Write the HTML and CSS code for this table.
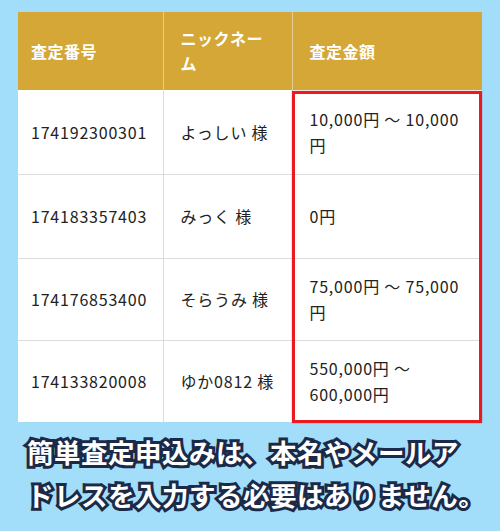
FILE: index.html
```html
<!DOCTYPE html>
<html lang="ja">
<head>
<meta charset="utf-8">
<link rel="stylesheet" href="styles.css">
</head>
<body>
<div class="page">
  <div class="table-wrap">
    <table class="result">
      <thead>
        <tr>
          <th class="c1">査定番号</th>
          <th class="c2">ニックネー<br>ム</th>
          <th class="c3">査定金額</th>
        </tr>
      </thead>
      <tbody>
        <tr class="r1">
          <td class="c1">174192300301</td>
          <td class="c2">よっしい 様</td>
          <td class="c3">10,000円 ～ 10,000<br>円</td>
        </tr>
        <tr class="r2">
          <td class="c1">174183357403</td>
          <td class="c2">みっく 様</td>
          <td class="c3">0円</td>
        </tr>
        <tr class="r3">
          <td class="c1">174176853400</td>
          <td class="c2">そらうみ 様</td>
          <td class="c3">75,000円 ～ 75,000<br>円</td>
        </tr>
        <tr class="r4">
          <td class="c1">174133820008</td>
          <td class="c2">ゆか0812 様</td>
          <td class="c3">550,000円 ～<br>600,000円</td>
        </tr>
      </tbody>
    </table>
    <div class="highlight"></div>
  </div>
  <p class="note">簡単査定申込みは、本名やメールア<br>ドレスを入力する必要はありません。</p>
</div>
</body>
</html>
```

FILE: styles.css
```css
html, body {
  margin: 0;
  padding: 0;
}
body {
  background: #a2ddfa;
  width: 500px;
  height: 531px;
  overflow: hidden;
  font-family: "Noto Sans CJK JP", "Noto Sans", sans-serif;
}
.page {
  padding: 12px 18px 0 18px;
}
.table-wrap {
  position: relative;
  width: 464px;
}
.result {
  width: 464px;
  border-collapse: collapse;
  table-layout: fixed;
  background: #fff;
  color: #222;
  font-size: 16px;
}
.result th {
  background: #d4a737;
  color: #fff;
  font-weight: 700;
  text-align: left;
  height: 78px;
  line-height: 25px;
  padding: 0 17px;
  box-sizing: border-box;
  border-left: 1px solid #e6cc93;
  vertical-align: middle;
  letter-spacing: 0.5px;
}
.result th.c1 {
  border-left: none;
}
.result td {
  height: 84px;
  line-height: 26px;
  padding: 0 17px;
  box-sizing: border-box;
  border-top: 1px solid #dcdcdc;
  border-left: 1px solid #dcdcdc;
  vertical-align: middle;
  letter-spacing: 0.8px;
}
.result tr.r1 td {
  border-top: none;
}
.result tr.r3 td,
.result tr.r4 td {
  height: 82px;
}
.result .c1 {
  width: 145px;
  padding-left: 13px;
  border-left: none;
}
.result .c2 {
  width: 129px;
}
.result .c3 {
  width: 190px;
}
.highlight {
  position: absolute;
  left: 274px;
  top: 79px;
  width: 190px;
  height: 332px;
  box-sizing: border-box;
  border: 3px solid #ea1a1f;
  box-shadow: 0 0 1px rgba(120, 0, 0, 0.6);
  pointer-events: none;
}
.note {
  margin: 8px 0 0 9px;
  font-size: 26.5px;
  line-height: 43px;
  font-weight: 700;
  color: #fff;
  white-space: nowrap;
  letter-spacing: 0.5px;
  -webkit-text-stroke: 6px #1b2a48;
  paint-order: stroke fill;
}
```
